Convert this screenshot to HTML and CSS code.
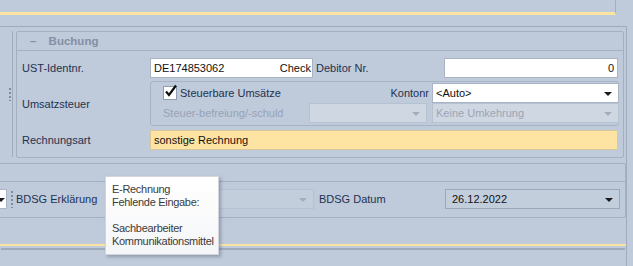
FILE: index.html
```html
<!DOCTYPE html>
<html lang="de">

<head>
    <meta charset="UTF-8">
    <title>Buchung</title>
    <link rel="stylesheet" href="styles.css">
</head>

<body>
    <div class="topbox"></div>

    <div class="panel">
        <div class="upper">
            <div class="strip">
                <span class="grip"></span>
            </div>

            <div class="group">
                <div class="group-head"><span class="minus">&ndash;</span> Buchung</div>
                <div class="group-body">
                    <div class="row">
                        <label class="lbl">UST-Identnr.</label>
                        <div class="edit ust">DE174853062<span class="check">Check</span></div>
                        <label class="lbl2">Debitor Nr.</label>
                        <div class="edit debitor">0</div>
                    </div>

                    <div class="row tall">
                        <label class="lbl">Umsatzsteuer</label>
                        <div class="taxbox">
                            <div class="chk-line">
                                <span class="chk">
                                    <svg width="14" height="14" viewBox="0 0 14 14">
                                        <path d="M2 7.5 L5 11 L12 1.5" fill="none" stroke="#111" stroke-width="2.2" />
                                    </svg>
                                </span>
                                <span>Steuerbare Umsätze</span>
                            </div>
                            <span class="konto">Kontonr</span>
                            <div class="combo auto">&lt;Auto&gt;<span class="arrow"></span></div>

                            <span class="muted">Steuer-befreiung/-schuld</span>
                            <div class="combo off"><span class="arrow"></span></div>
                            <div class="combo off">Keine Umkehrung<span class="arrow"></span></div>
                        </div>
                    </div>

                    <div class="row">
                        <label class="lbl">Rechnungsart</label>
                        <div class="edit yellow">sonstige Rechnung</div>
                    </div>
                </div>
            </div>
        </div>

        <div class="group lower">
            <div class="group-head"></div>
            <div class="lower-row">
                <div class="combo stub"><span class="arrow"></span></div>
                <span class="grip small"></span>
                <label class="bdsg-lbl">BDSG Erklärung</label>
                <div class="combo off bdsg"><span class="arrow"></span></div>
                <label class="datum-lbl">BDSG Datum</label>
                <div class="combo date">26.12.2022<span class="arrow"></span></div>
            </div>
        </div>

        <div class="footline"></div>
    </div>

    <div class="tooltip">
        E-Rechnung<br>
        Fehlende Eingabe:<br>
        <br>
        Sachbearbeiter<br>
        Kommunikationsmittel
    </div>
</body>

</html>
```

FILE: styles.css
```css
/* styles.css */

body {
    margin: 0;
    background-color: #bfcadb;
    font-family: "Liberation Sans", Arial, sans-serif;
    font-size: 11px;
    color: #1e3250;
    position: relative;
    height: 266px;
    overflow: hidden;
}

.topbox {
    width: 615px;
    height: 12px;
    border-right: 1px solid #a3b0c2;
    border-bottom: 3px solid #fbe3a2;
}

.panel {
    margin-top: 11px;
    width: 626px;
    height: 240px;
    border-top: 1px solid #9eabbd;
    border-right: 1px solid #9eabbd;
}

.upper {
    display: flex;
    padding-top: 4px;
}

.strip {
    width: 12px;
    height: 126px;
    border-right: 1px solid #9eabbd;
    margin-right: 3px;
}

.grip {
    display: block;
    width: 2px;
    height: 14px;
    margin: 56px 0 0 9px;
    background-image: radial-gradient(circle, #7d8ca2 1px, transparent 1px);
    background-size: 2px 4px;
}

.grip.small {
    height: 18px;
    margin: 0 3px 0 4px;
}

.group {
    width: 606px;
    border: 1px solid #a3b0c2;
    border-radius: 2px;
}

.group-head {
    height: 18px;
    border-bottom: 1px solid #a3b0c2;
    font-weight: bold;
    font-size: 11.5px;
    color: #8390a4;
    line-height: 18px;
    padding-left: 13px;
}

.minus {
    margin-right: 9px;
}

.group-body {
    padding: 7px 5px 7px 5px;
}

.row {
    display: flex;
    align-items: center;
    height: 20px;
    margin-bottom: 5px;
}

.row:last-child {
    margin-bottom: 0;
}

.row.tall {
    height: 43px;
    margin-top: -1px;
}

.lbl {
    width: 128px;
    flex-shrink: 0;
}

.lbl2 {
    width: 128px;
    padding-left: 3px;
}

.edit {
    height: 18px;
    line-height: 18px;
    border: 1px solid #a9b5c6;
    background: #fff;
    padding: 0 3px;
    color: #111;
}

.ust {
    width: 155px;
    display: flex;
    justify-content: space-between;
}

.check {
    margin-right: -2px;
}

.debitor {
    width: 166px;
    text-align: right;
}

.yellow {
    width: 460px;
    background: #fde4a3;
    border-color: #d8c79a;
}

.taxbox {
    width: 455px;
    height: 41px;
    border: 1px solid #a6b3c5;
    border-radius: 3px;
    padding: 1px 0 1px 12px;
    display: grid;
    grid-template-columns: 140px 117px 186px;
    grid-template-rows: 20px 20px;
    column-gap: 6px;
    align-items: center;
}

.chk-line {
    display: flex;
    align-items: center;
    gap: 3px;
    grid-column: 1 / 3;
    grid-row: 1;
}

.chk {
    width: 12px;
    height: 12px;
    border: 1px solid #8f9db1;
    background: #fff;
    position: relative;
}

.chk svg {
    position: absolute;
    left: 0;
    top: -3px;
}

.konto {
    text-align: right;
    margin-right: -3px;
    grid-column: 2;
    grid-row: 1;
}

.combo {
    position: relative;
    height: 18px;
    line-height: 18px;
    border: 1px solid #a9b5c6;
    background: #fff;
    padding: 0 3px;
    color: #111;
}

.auto {
    grid-column: 3;
    grid-row: 1;
}

.taxbox .combo {
    margin-right: -1px;
}

.arrow {
    position: absolute;
    right: 6px;
    top: 8px;
    border-left: 4px solid transparent;
    border-right: 4px solid transparent;
    border-top: 4px solid #1b1b1b;
}

.combo.off {
    background: #cfd7e2;
    border-color: #b7c2d1;
    color: #9aa6b7;
}

.combo.off .arrow {
    border-top-color: #a4afbe;
}

.muted {
    color: #97a3b4;
}

.lower {
    width: 626px;
    margin-left: -2px;
    margin-top: 5px;
    height: 53px;
}

.lower .group-head {
    height: 17px;
}

.lower-row {
    display: flex;
    align-items: center;
    height: 20px;
    margin-top: 7px;
}

.combo.stub {
    width: 5px;
    margin-left: -2px;
    padding: 0 3px 0 0;
}

.combo.stub .arrow {
    right: 1px;
}

.bdsg-lbl {
    width: 133px;
}

.combo.bdsg {
    width: 157px;
    background: #c3cedd;
}

.datum-lbl {
    width: 126px;
    padding-left: 5px;
}

.combo.date {
    width: 164px;
    background: #c3cedd;
    border-color: #9aa8bb;
    padding-left: 6px;
}

.footline {
    margin-top: 26px;
    height: 2px;
    background: #fbe3a2;
    border-bottom: 2px solid #bfcadb;
    box-shadow: 0 3px 0 -1px #9eabbd;
}

.tooltip {
    position: absolute;
    left: 105px;
    top: 176px;
    width: 106px;
    height: 71px;
    padding: 6px 0 0 6px;
    background: linear-gradient(#ffffff, #f4f5f7);
    border: 1px solid #d2d6dc;
    box-shadow: 2px 2px 3px rgba(60, 70, 90, 0.35);
    color: #3b3b3b;
    font-size: 11px;
    letter-spacing: -0.3px;
    line-height: 13px;
}
```
